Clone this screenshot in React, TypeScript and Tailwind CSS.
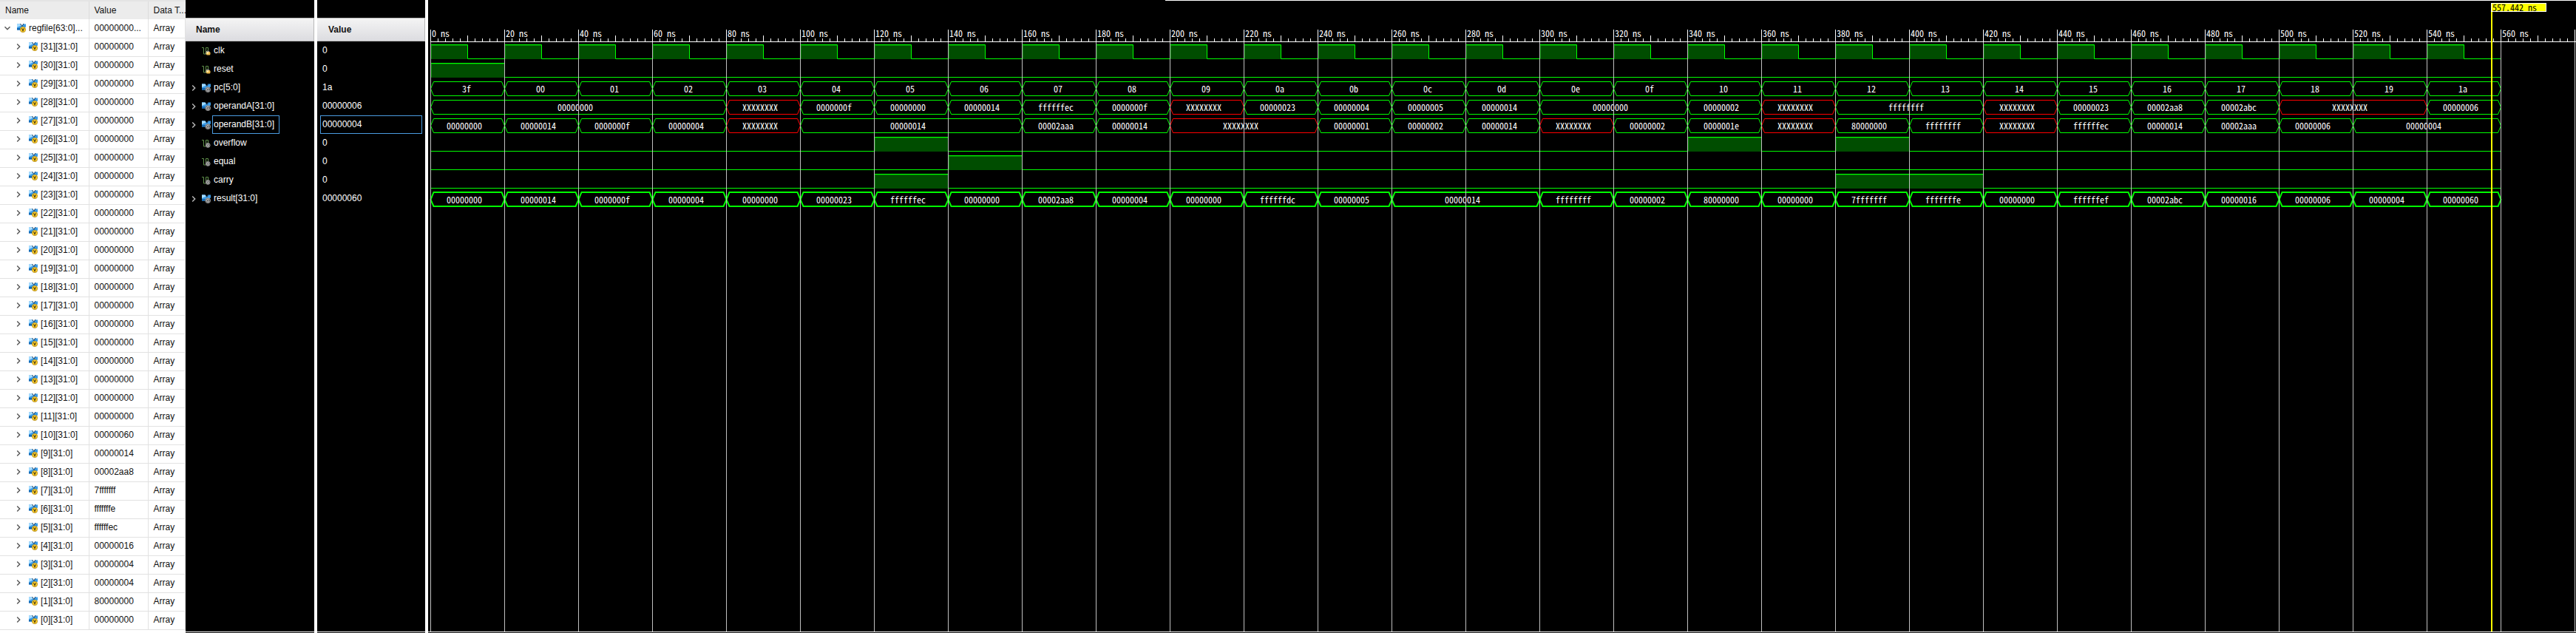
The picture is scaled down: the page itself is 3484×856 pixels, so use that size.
import React from "react";

const NS = 5;
const ROW = 25;
const FIRST_ROW = 60;
const END = 560;
const GREEN = "#00ff00";
const RED = "#ff0000";

type Bus = [number, string][];
type Signal =
  | { name: string; value: string; kind: "bit"; input?: boolean; high: [number, number][] }
  | { name: string; value: string; kind: "bus"; bold?: boolean; selected?: boolean; data: Bus };

const hex2 = (n: number) => n.toString(16).padStart(2, "0");

const signals: Signal[] = [
  {
    name: "clk", value: "0", kind: "bit", input: true,
    high: Array.from({ length: 28 }, (_, i): [number, number] => [i * 20, i * 20 + 10]),
  },
  { name: "reset", value: "0", kind: "bit", input: true, high: [[0, 20]] },
  {
    name: "pc[5:0]", value: "1a", kind: "bus",
    data: [[0, "3f"], ...Array.from({ length: 27 }, (_, i): [number, string] => [(i + 1) * 20, hex2(i)])],
  },
  {
    name: "operandA[31:0]", value: "00000006", kind: "bus",
    data: [
      [0, "00000000"], [80, "XXXXXXXX"], [100, "0000000f"], [120, "00000000"], [140, "00000014"],
      [160, "ffffffec"], [180, "0000000f"], [200, "XXXXXXXX"], [220, "00000023"], [240, "00000004"],
      [260, "00000005"], [280, "00000014"], [300, "00000000"], [340, "00000002"], [360, "XXXXXXXX"],
      [380, "ffffffff"], [420, "XXXXXXXX"], [440, "00000023"], [460, "00002aa8"], [480, "00002abc"],
      [500, "XXXXXXXX"], [540, "00000006"],
    ],
  },
  {
    name: "operandB[31:0]", value: "00000004", kind: "bus", selected: true,
    data: [
      [0, "00000000"], [20, "00000014"], [40, "0000000f"], [60, "00000004"], [80, "XXXXXXXX"],
      [100, "00000014"], [160, "00002aaa"], [180, "00000014"], [200, "XXXXXXXX"], [240, "00000001"],
      [260, "00000002"], [280, "00000014"], [300, "XXXXXXXX"], [320, "00000002"], [340, "0000001e"],
      [360, "XXXXXXXX"], [380, "80000000"], [400, "ffffffff"], [420, "XXXXXXXX"], [440, "ffffffec"],
      [460, "00000014"], [480, "00002aaa"], [500, "00000006"], [520, "00000004"],
    ],
  },
  { name: "overflow", value: "0", kind: "bit", high: [[120, 140], [340, 360], [380, 400]] },
  { name: "equal", value: "0", kind: "bit", high: [[140, 160]] },
  { name: "carry", value: "0", kind: "bit", high: [[120, 140], [380, 420]] },
  {
    name: "result[31:0]", value: "00000060", kind: "bus", bold: true,
    data: [
      [0, "00000000"], [20, "00000014"], [40, "0000000f"], [60, "00000004"], [80, "00000000"],
      [100, "00000023"], [120, "ffffffec"], [140, "00000000"], [160, "00002aa8"], [180, "00000004"],
      [200, "00000000"], [220, "ffffffdc"], [240, "00000005"], [260, "00000014"], [300, "ffffffff"],
      [320, "00000002"], [340, "80000000"], [360, "00000000"], [380, "7fffffff"], [400, "fffffffe"],
      [420, "00000000"], [440, "ffffffef"], [460, "00002abc"], [480, "00000016"], [500, "00000006"],
      [520, "00000004"], [540, "00000060"],
    ],
  },
];

const registerValues: Record<number, string> = {
  10: "00000060", 9: "00000014", 8: "00002aa8", 7: "7fffffff", 6: "fffffffe",
  5: "ffffffec", 4: "00000016", 3: "00000004", 2: "00000004", 1: "80000000",
};

function Chevron({ down = false, color }: { down?: boolean; color: string }) {
  return (
    <svg viewBox="0 0 8 8" className="block size-2" fill="none" stroke={color} strokeWidth="1.4">
      <path d={down ? "M0.5 2.2 4 5.7 7.5 2.2" : "M2.2 0.5 5.7 4 2.2 7.5"} />
    </svg>
  );
}

function BusIcon({ variable = false }: { variable?: boolean }) {
  return (
    <svg viewBox="0 0 12 12" className="block size-3 shrink-0">
      <path d="M0 0.5h4.500L6.500 3 8.500 0.500H12v4L9 6 6 8.500H0z" fill="#3b9be6" />
      <path d="M0 0.500h4.500L6 2.500 0 5z" fill="#a5dcff" />
      <path d="M0 6h6l-1 2.500H0z" fill="#1469b3" />
      <path d="M4.500 0 6.800 3.500 9 0" stroke="#173f63" strokeWidth="1" fill="none" />
      {variable ? (
        <>
          <circle cx="8" cy="8" r="3.700" fill="#ffd02a" stroke="#9a7413" strokeWidth="0.600" />
          <path d="M6.500 6.200 8 9.600 9.500 6.200" stroke="#4a3a10" strokeWidth="1.100" fill="none" />
        </>
      ) : (
        <>
          <circle cx="8.200" cy="8.200" r="3.400" fill="#555" stroke="#aaa" strokeWidth="0.800" />
          <path d="M9.800 6.800a2 2 0 1 0 .3 2.400M8 8.200h1.500" stroke="#ddd" strokeWidth="0.900" fill="none" />
        </>
      )}
    </svg>
  );
}

function BitIcon({ input = false }: { input?: boolean }) {
  return (
    <svg viewBox="0 0 12 12" className="block size-3 shrink-0">
      <path d="M0 1.500h2.500v8.500h3V1.500h3v4" stroke="#5f8f4a" strokeWidth="1" fill="none" />
      {input ? (
        <>
          <path d="M6 10.500V8a2 2 0 0 1 4 0" stroke="#cfcfcf" strokeWidth="1" fill="none" />
          <rect x="6" y="7" width="5.500" height="4.500" rx="1.500" fill="#e9b84a" />
          <rect x="7" y="7.500" width="2" height="2" fill="#fff3c8" />
        </>
      ) : (
        <>
          <circle cx="8.200" cy="8.400" r="3" fill="#555" stroke="#999" strokeWidth="0.800" />
          <path d="M9.600 7.200a1.800 1.800 0 1 0 .3 2.200M8 8.400h1.500" stroke="#ddd" strokeWidth="0.900" fill="none" />
        </>
      )}
    </svg>
  );
}

function ObjectRow({ name, value, root = false }: { name: string; value: string; root?: boolean }) {
  return (
    <tr className="h-[25px] border-b border-[#e2e2e2]">
      <td className="border-r border-[#e2e2e2] p-0 pb-px">
        <div className={root ? "flex items-center pl-1.5" : "flex items-center pl-[21px]"}>
          <button type="button" aria-label={"Toggle " + name} className={root ? "mr-[9px]" : "mr-2.5"}>
            <Chevron down={root} color="#555" />
          </button>
          <BusIcon variable />
          <span className="ml-1">{name}</span>
        </div>
      </td>
      <td className="border-r border-[#e2e2e2] p-0 pb-px pl-[7px]">{value}</td>
      <td className="border-r border-[#e2e2e2] p-0 pb-px pl-[7px]">Array</td>
    </tr>
  );
}

function ObjectTable() {
  return (
    <div className="w-[251px] shrink-0 overflow-hidden bg-white text-[#111]">
      <div className="h-0.5 bg-[#e4e4e4]" />
      <table className="w-full table-fixed border-collapse text-left leading-4">
        <colgroup>
          <col className="w-[120px]" />
          <col className="w-20" />
          <col />
        </colgroup>
        <thead>
          <tr className="h-6 bg-[#ececec]">
            <th className="border-r border-[#dcdcdc] p-0 pb-px pl-[7px] font-normal">Name</th>
            <th className="border-r border-[#dcdcdc] p-0 pb-px pl-[7px] font-normal">Value</th>
            <th className="p-0 pb-px pl-[7px] font-normal whitespace-nowrap">Data T...</th>
          </tr>
        </thead>
        <tbody>
          <ObjectRow name="regfile[63:0]..." value="00000000..." root />
          {Array.from({ length: 32 }, (_, i) => 31 - i).map((n) => (
            <ObjectRow key={n} name={`[${n}][31:0]`} value={registerValues[n] ?? "00000000"} />
          ))}
        </tbody>
      </table>
    </div>
  );
}

const headerClass =
  "h-8 border border-l-0 border-[#b8b8b8] bg-linear-to-b from-[#f4f4f4] to-[#dcdce0] font-bold leading-[30px] text-[#111]";

function SignalNames() {
  return (
    <div className="w-[174px] shrink-0 bg-black pt-6 text-white">
      <div className={headerClass + " pl-3.5"}>Name</div>
      <ul>
        {signals.map((s) => (
          <li key={s.name} className="flex h-[25px] items-center pl-[7px]">
            <span className="w-[15px]">
              {s.kind === "bus" && (
                <button type="button" aria-label={"Expand " + s.name} className="block">
                  <Chevron color="#bbb" />
                </button>
              )}
            </span>
            {s.kind === "bus" ? <BusIcon /> : <BitIcon input={s.input} />}
            <span
              className={
                s.kind === "bus" && s.selected
                  ? "ml-0.5 h-[25px] border border-[#4a9be0] pr-1.5 pl-px leading-[22px]"
                  : "ml-1 h-[25px] border-y border-transparent leading-[22px]"
              }
            >
              {s.name}
            </span>
          </li>
        ))}
      </ul>
    </div>
  );
}

function SignalValues() {
  return (
    <div className="w-[146px] shrink-0 bg-black pt-6 text-white">
      <div className={headerClass + " pl-[15px]"}>Value</div>
      <ul className="px-1">
        {signals.map((s) => (
          <li
            key={s.name}
            className={
              s.kind === "bus" && s.selected
                ? "h-[25px] border border-[#4a9be0] pl-0.5 leading-[22px]"
                : "h-[25px] border border-transparent pl-0.5 leading-[22px]"
            }
          >
            {s.value}
          </li>
        ))}
      </ul>
    </div>
  );
}

function BitWave({ y, high }: { y: number; high: [number, number][] }) {
  let d = "";
  let t = 0;
  for (const [a, b] of high) {
    if (a > t) d += `M${t * NS} ${y + 19}H${a * NS}`;
    d += `M${a * NS} ${y + 19}V${y}H${b * NS}V${y + 19}`;
    t = b;
  }
  if (t < END) d += `M${t * NS} ${y + 19}H${END * NS}`;
  return (
    <g>
      {high.map(([a, b]) => (
        <g key={a}>
          <rect x={a * NS} y={y} width={(b - a) * NS} height="20" fill="#004d00" />
          <path d={`M${a * NS + 1} ${y + 19}V${y + 1}H${b * NS}`} stroke="#008000" fill="none" transform="translate(.5 .5)" />
        </g>
      ))}
      <path d={d} stroke={GREEN} fill="none" transform="translate(.5 .5)" />
    </g>
  );
}

function BusWave({ y, data, bold = false }: { y: number; data: Bus; bold?: boolean }) {
  return (
    <g>
      {data.map(([start, value], i) => {
        const a = start * NS;
        const b = (i + 1 < data.length ? data[i + 1][0] : END) * NS;
        const color = value[0] === "X" ? RED : GREEN;
        const top = bold ? y - 0.5 : y;
        const bottom = bold ? y + 18.5 : y + 19;
        return (
          <g key={start}>
            <path
              d={`M${a} ${y + 9.5}L${a + 4} ${top}H${b - 4}L${b} ${y + 9.5}L${b - 4} ${bottom}H${a + 4}Z`}
              stroke={color}
              strokeWidth={bold ? 2 : 1}
              fill="none"
              transform="translate(.5 .5)"
            />
            <text x={(a + b) / 2 - value.length * 3.5} y={y + 15} fill="#fff">
              {value}
            </text>
          </g>
        );
      })}
    </g>
  );
}

function Waveform() {
  const majors = Array.from({ length: 30 }, (_, i) => i * 20);
  const minors = Array.from({ length: 290 }, (_, i) => i * 2).filter((t) => t % 20 !== 0);
  return (
    <div className="flex min-w-0 flex-1 bg-black">
      <svg
        className="w-full self-stretch overflow-hidden font-['Noto_Sans_Mono_CJK_SC','Liberation_Mono',monospace] text-[12px]"
        role="img"
        aria-label="Waveform"
      >
        <rect x="997" y="0" width="100%" height="1" fill="#fff" />
        <g shapeRendering="crispEdges">
          <rect x="3" y="56" width="100%" height="1" fill="#fff" />
          {minors.map((t) => (
            <rect key={t} x={3 + t * NS} y={t % 10 === 0 ? 48 : 52} width="1" height={t % 10 === 0 ? 8 : 4} fill="#fff" />
          ))}
        </g>
        <g transform="translate(3 0)">
          {majors.slice(0, 29).map((t) => (
            <text key={t} x={t * NS + 2} y="50" fill="#fff">
              {t + " ns"}
            </text>
          ))}
          {signals.map((s, i) =>
            s.kind === "bit" ? (
              <BitWave key={s.name} y={FIRST_ROW + i * ROW} high={s.high} />
            ) : (
              <BusWave key={s.name} y={FIRST_ROW + i * ROW} data={s.data} bold={s.bold} />
            ),
          )}
        </g>
        <g shapeRendering="crispEdges">
          {majors.map((t) => (
            <g key={t}>
              <rect x={3 + t * NS} y="57" width="1" height="100%" fill="#c0c0c0" />
              <rect x={3 + t * NS} y="40" width="1" height="17" fill="#fff" />
            </g>
          ))}
          <rect x="2790" y="4" width="2" height="100%" fill="#ffff00" />
          <rect x="2790.500" y="4.500" width="74" height="11" fill="#ffff00" stroke="#fff" />
        </g>
        <text x="2792" y="15" fill="#000">
          557.442 ns
        </text>
      </svg>
    </div>
  );
}

export default function App() {
  return (
    <main className="flex min-h-screen bg-white font-['Liberation_Sans',Arial,sans-serif] text-xs">
      <ObjectTable />
      <div className="flex min-w-0 flex-1 flex-col">
        <div className="flex flex-1 gap-1">
          <SignalNames />
          <SignalValues />
          <Waveform />
        </div>
        <div className="mt-px flex h-px gap-1">
          <div className="w-[174px] shrink-0 bg-black" />
          <div className="w-[146px] shrink-0 bg-black" />
          <div className="flex-1 bg-black" />
        </div>
      </div>
    </main>
  );
}
